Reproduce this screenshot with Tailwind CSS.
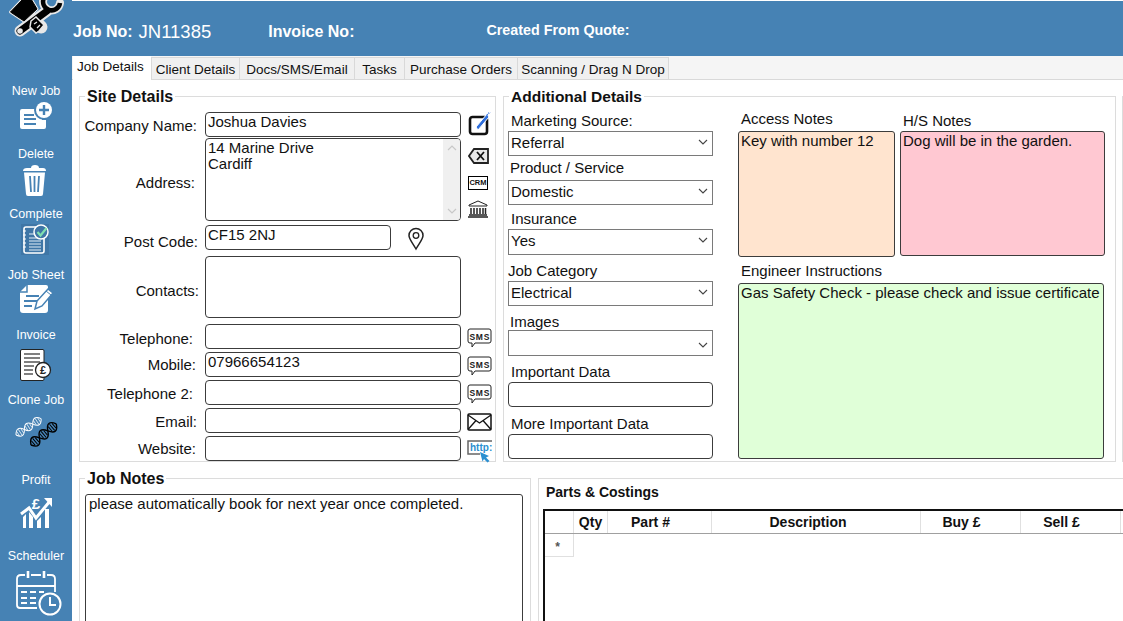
<!DOCTYPE html>
<html lang="en">
<head>
    <meta charset="UTF-8">
    <title>Job Details</title>
    <script src="https://cdn.jsdelivr.net/npm/@tailwindcss/browser@4"></script>
</head>
<body class="bg-white">
<div class="flex w-[1123px] h-[621px] overflow-hidden [font-family:'Liberation_Sans',sans-serif] text-[15px] leading-4 text-[#111]">

    <!-- sidebar -->
    <aside class="w-[72px] shrink-0 bg-[#4682b4] text-white text-[12.500px] text-center">
        <div class="h-[83px]">
            <svg width="72" height="42" viewBox="0 0 72 42">
                <g fill="none" stroke="#e8e8e8" stroke-linecap="round" stroke-linejoin="round">
                    <path d="M10.500 12 L23 -1 H31 L37 9 L24 21Z" fill="#e8e8e8" stroke-width="3"/>
                    <path d="M29 16 L41 27" stroke-width="13"/>
                    <path d="M20 31 L47 11" stroke-width="11"/>
                    <path d="M44 -2 A8.500 8.500 0 1 0 60 3" stroke-width="8"/>
                </g>
                <g fill="none" stroke="#000" stroke-linejoin="round">
                    <path d="M10.500 12 L23 -1 H31 L37 9 L24 21Z" fill="#000" stroke-width="1"/>
                    <path d="M20 31 L47 11" stroke-width="7" stroke-linecap="round"/>
                    <path d="M44 -2 A8.500 8.500 0 1 0 60 3" stroke-width="4.500"/>
                </g>
                <path d="M31 21 L36 17 L44 25 L39 31 L36 33 L30 27Z" fill="#000" stroke="#e8e8e8" stroke-width="1.500"/>
                <path d="M34 24 L37 22 M37 28 L40 25" stroke="#e8e8e8" stroke-width="1.300"/>
                <circle cx="20" cy="31" r="2.800" fill="#e8e8e8"/>
            </svg>
        </div>
        <div class="h-[63px] flex flex-col items-center">
            <span>New Job</span>
            <svg class="mt-[3px]" width="72" height="30" viewBox="0 102 72 30">
                <path d="M22 109 H42 V120 H46 V127 Q46 129 44 129 H22 Q20 129 20 127 V111 Q20 109 22 109Z" fill="#fff"/>
                <circle cx="44" cy="110" r="10" fill="#4682b4"/>
                <circle cx="44" cy="110" r="8" fill="#fff"/>
                <path d="M44 105 V115 M39 110 H49" stroke="#4682b4" stroke-width="2.400"/>
                <path d="M24 115 H34 M24 119 H36 M24 124 H36" stroke="#4682b4" stroke-width="2"/>
            </svg>
        </div>
        <div class="h-[60px] flex flex-col items-center">
            <span>Delete</span>
            <svg class="mt-[3px]" width="72" height="32" viewBox="0 165 72 32">
                <path d="M23 171 Q23 168 27 168 H31 Q31 165 35 165 Q39 165 39 168 H43 Q46 168 46 171 Z" fill="#fff"/>
                <path d="M24 172.500 H45 L43 194 Q43 196 41 196 H28 Q26 196 26 194Z" fill="#fff"/>
                <path d="M30 176 L31 192 M34.500 176 V192 M39 176 L38 192" stroke="#4682b4" stroke-width="1.800"/>
            </svg>
        </div>
        <div class="h-[61px] flex flex-col items-center">
            <span>Complete</span>
            <svg class="mt-0.5" width="72" height="32" viewBox="0 224 72 32">
                <rect x="21" y="224" width="28" height="31" fill="#3f76a6"/>
                <rect x="24" y="227" width="20" height="26" rx="2" fill="#3f76a6" stroke="#fff" stroke-width="1.600"/>
                <path d="M23 231 H26 M23 235 H26 M23 239 H26 M23 243 H26 M23 247 H26" stroke="#fff" stroke-width="1.200"/>
                <path d="M29 234 H35 M29 238 H41 M29 241 H41 M29 244 H41 M29 247 H41 M29 250 H41" stroke="#e4eef6" stroke-width="1.200"/>
                <circle cx="41" cy="232" r="7" fill="#3f76a6" stroke="#fff" stroke-width="1.500"/>
                <path d="M37.500 232 L40.500 235.500 L46.500 228" fill="none" stroke="#7fe0b0" stroke-width="2.200"/>
            </svg>
        </div>
        <div class="h-[60px] flex flex-col items-center">
            <span>Job Sheet</span>
            <svg class="mt-px" width="72" height="31" viewBox="0 284 72 31">
                <path d="M27 285 H46 Q48 285 48 287 V310 Q48 313 45 313 H23 Q20 313 20 310 V292Z" fill="#fff"/>
                <path d="M27 285 V292 H20" fill="none" stroke="#4682b4" stroke-width="1.500"/>
                <path d="M26 296 H39 M24 301 H37 M24 306 H32" stroke="#4682b4" stroke-width="2"/>
                <path d="M35 309 L37 301 L48 289 L53 293 L42 306Z" fill="#fff" stroke="#4682b4" stroke-width="1.500"/>
                <path d="M46 291 L51 295" stroke="#4682b4" stroke-width="1"/>
            </svg>
        </div>
        <div class="h-[65px] flex flex-col items-center">
            <span>Invoice</span>
            <svg class="mt-1.5" width="72" height="33" viewBox="0 349 72 33">
                <path d="M22 349.500 H43 Q44 349.500 44 351 V379 Q44 380.500 43 380.500 H22 Q20.500 380.500 20.500 379 V351 Q20.500 349.500 22 349.500Z" fill="#fff" stroke="#222"/>
                <path d="M24 354 H40 M24 358 H40 M24 362 H40 M24 366 H34 M24 370 H33 M24 374 H33" stroke="#555" stroke-width="1.300"/>
                <circle cx="43" cy="370" r="7.500" fill="#fff" stroke="#222" stroke-width="1.300"/>
                <text x="43" y="374" text-anchor="middle" font-size="11" font-weight="700" fill="#222">£</text>
            </svg>
        </div>
        <div class="h-[80px] flex flex-col items-center">
            <span>Clone Job</span>
            <svg class="mt-[7px]" width="72" height="34" viewBox="0 414 72 34">
                <g transform="translate(16 434) rotate(-33)" fill="none" stroke="#fff" stroke-width="1">
                    <path d="M0 0 Q5 -8 10 0 T20 0 T30 0"/>
                    <path d="M0 0 Q5 8 10 0 T20 0 T30 0"/>
                    <path d="M2.500 -2.500 V2.500 M5 -3.500 V3.500 M7.500 -2.500 V2.500 M12.500 -2.500 V2.500 M15 -3.500 V3.500 M17.500 -2.500 V2.500 M22.500 -2.500 V2.500 M25 -3.500 V3.500 M27.500 -2.500 V2.500" stroke-width="0.700"/>
                </g>
                <g transform="translate(31 444) rotate(-40)" fill="none" stroke="#000" stroke-width="1.400">
                    <path d="M0 0 Q5.500 -10 11 0 T22 0 T33 0"/>
                    <path d="M0 0 Q5.500 10 11 0 T22 0 T33 0"/>
                    <path d="M3 -3 V3 M5.500 -4 V4 M8 -3 V3 M14 -3 V3 M16.500 -4 V4 M19 -3 V3 M25 -3 V3 M27.500 -4 V4 M30 -3 V3" stroke-width="1"/>
                </g>
            </svg>
        </div>
        <div class="h-[76px] flex flex-col items-center">
            <span>Profit</span>
            <svg class="mt-[5px]" width="72" height="37" viewBox="0 492 72 37">
                <text x="36" y="508" text-anchor="middle" font-size="15" font-weight="700" fill="#fff">£</text>
                <path d="M21 513 L29 507 L36 517 L50 500" fill="none" stroke="#fff" stroke-width="3"/>
                <path d="M44 497 H52 V506Z" fill="#fff"/>
                <path d="M23 516 L26 513 V527 H23Z M29 511 L33 516 V527 H29Z M37 520 L41 516 V527 H37Z M45 508 H49 V527 H45Z" fill="#fff"/>
            </svg>
        </div>
        <div class="h-[74px] flex flex-col items-center">
            <span>Scheduler</span>
            <svg class="mt-1.5" width="72" height="46" viewBox="0 570 72 46">
                <g fill="none" stroke="#fff" stroke-width="1.800">
                    <path d="M37 608 H20 Q17 608 17 605 V579 Q17 575 21 575 H25 M31 575 H41 M47 575 H51 Q55 575 55 579 V592"/>
                    <path d="M17 586 H55"/>
                    <path d="M28 571 V578 M44 571 V578" stroke-width="2.600"/>
                    <circle cx="50" cy="604" r="10.500" stroke-width="2"/>
                    <path d="M50 597 V605 H56" stroke-width="2"/>
                    <path d="M21 592 H27 M30 592 H36 M39 592 H44 M21 598 H27 M30 598 H36 M21 603 H27 M30 603 H36"/>
                </g>
            </svg>
        </div>
    </aside>

    <main class="flex-1 min-w-0 flex flex-col">
        <div class="h-px bg-white"></div>

        <!-- header -->
        <header class="h-[55px] bg-[#4682b4] text-white font-bold flex items-end pb-4">
            <span class="ml-px text-[16px]">Job No:</span>
            <span class="ml-1.5 text-[18.500px] font-normal">JN11385</span>
            <span class="ml-[57px] text-[16px]">Invoice No:</span>
            <span class="ml-[132px] text-[14.300px] pb-0.5">Created From Quote:</span>
        </header>

        <!-- tabs -->
        <nav class="h-6 bg-[#f5f5f5] border-b border-[#d9d9d9] flex items-end text-[13.500px] pl-px">
            <div class="w-[78px] h-6 bg-white -mb-px pt-[3px] pl-1">Job Details</div>
            <div class="w-[89px] h-[22px] bg-[#f0f0f0] border border-[#d9d9d9] border-b-0 pt-1 text-center">Client Details</div>
            <div class="w-[115px] h-[22px] bg-[#f0f0f0] border-r border-t border-[#d9d9d9] pt-1 text-center">Docs/SMS/Email</div>
            <div class="w-[50px] h-[22px] bg-[#f0f0f0] border-r border-t border-[#d9d9d9] pt-1 text-center">Tasks</div>
            <div class="w-[113px] h-[22px] bg-[#f0f0f0] border-r border-t border-[#d9d9d9] pt-1 text-center">Purchase Orders</div>
            <div class="w-[151px] h-[22px] bg-[#f0f0f0] border-r border-t border-[#d9d9d9] pt-1 text-center">Scanning / Drag N Drop</div>
        </nav>

        <div class="flex-1 pt-4 pl-[7px] min-h-0">
            <div class="flex h-[366px]">

                <!-- site details -->
                <section class="relative w-[417px] shrink-0 border border-[#dcdcdc] pt-[15px]">
                    <h2 class="absolute -top-[8px] left-[5px] bg-white px-0.5 font-bold text-[16px]">Site Details</h2>

                    <div class="flex items-center h-[25px]">
                        <label class="w-[120px] text-right pr-[3px] pt-[3px]">Company Name:</label>
                        <div class="ml-[5px] w-[256px] h-full border border-[#3c3c3c] rounded-[4px] px-0.5 pt-px">Joshua Davies</div>
                        <svg class="ml-[7px]" width="24" height="25" viewBox="0 0 24 25">
                            <rect x="2" y="5" width="17" height="17" rx="2.500" fill="none" stroke="#111" stroke-width="2.600"/>
                            <path d="M8 15 L10 18 L21 5 L19 2Z" fill="#2f6fdc" stroke="#fff"/>
                            <path d="M19 3 L22 0" stroke="#2f6fdc" stroke-width="1.500" stroke-dasharray="1 1"/>
                        </svg>
                    </div>

                    <div class="flex mt-px h-[83px]">
                        <label class="w-[120px] text-right pr-[5px] pt-[37px]">Address:</label>
                        <div class="ml-[5px] w-[256px] h-full border border-[#3c3c3c] rounded-[4px] pl-0.5 pt-px flex">
                            <div class="flex-1">14 Marine Drive<br>Cardiff</div>
                            <div class="w-[17px] -mt-px bg-[#f0f0f0] flex flex-col justify-between py-1.5 items-center rounded-r-[3px]">
                                <svg width="10" height="6" viewBox="0 0 10 6"><path d="M1 5 L5 1 L9 5" fill="none" stroke="#c8c8c8" stroke-width="1.200"/></svg>
                                <svg width="10" height="6" viewBox="0 0 10 6"><path d="M1 1 L5 5 L9 1" fill="none" stroke="#c8c8c8" stroke-width="1.200"/></svg>
                            </div>
                        </div>
                        <div class="ml-[7px] flex flex-col">
                            <svg class="mt-[9px]" width="22" height="18" viewBox="0 0 22 18">
                                <path d="M6 2 H20 V16 H6 L1 9Z" fill="#e8e8e8" stroke="#222" stroke-width="1.800"/>
                                <path d="M9 5 L16 13 M16 5 L9 13" stroke="#111" stroke-width="1.800"/>
                            </svg>
                            <div class="mt-[11px] w-5 h-[14px] border border-black text-[7.500px] font-bold text-center leading-[12px]">CRM</div>
                            <svg class="mt-[10px]" width="20" height="18" viewBox="0 0 20 18">
                                <path d="M10 1 L19 5 V6 H1 V5Z" fill="none" stroke="#222"/>
                                <path d="M3 8 V14 M6 8 V14 M9 8 V14 M12 8 V14 M15 8 V14 M17.500 8 V14" stroke="#222" stroke-width="1.500"/>
                                <path d="M1 15 H19 M0 17 H20" stroke="#222" stroke-width="1.300"/>
                            </svg>
                        </div>
                    </div>

                    <div class="flex items-center h-[25px] mt-1">
                        <label class="w-[120px] text-right pr-0.5 pt-2">Post Code:</label>
                        <div class="ml-[5px] w-[186px] h-full border border-[#3c3c3c] rounded-[4px] px-0.5 pt-px">CF15 2NJ</div>
                        <svg class="ml-[16px] mt-[2px]" width="18" height="24" viewBox="0 0 18 24">
                            <path d="M9 22 C5 15 2 12 2 8.500 A7 7 0 0 1 16 8.500 C16 12 13 15 9 22Z" fill="none" stroke="#222" stroke-width="1.500"/>
                            <circle cx="9" cy="8.500" r="2.800" fill="none" stroke="#222" stroke-width="1.300"/>
                        </svg>
                    </div>

                    <div class="flex items-center h-[62px] mt-1.5">
                        <label class="w-[120px] text-right pr-px pt-2">Contacts:</label>
                        <div class="ml-[5px] w-[256px] h-full border border-[#3c3c3c] rounded-[4px]"></div>
                    </div>

                    <div class="flex items-center h-[25px] mt-1.5">
                        <label class="w-[120px] text-right pr-[7px] pt-1">Telephone:</label>
                        <div class="ml-[5px] w-[256px] h-full border border-[#3c3c3c] rounded-[4px]"></div>
                        <svg class="ml-1.5 mt-[3px]" width="25" height="20" viewBox="0 0 25 20">
                            <path d="M3 1 H22 Q24 1 24 3 V13 Q24 15 22 15 H8 L5 19 V15 H3 Q1 15 1 13 V3 Q1 1 3 1Z" fill="#fff" stroke="#222"/>
                            <text x="12.800" y="11.500" text-anchor="middle" font-size="8.500" letter-spacing="0.800" font-weight="700" fill="#222">SMS</text>
                        </svg>
                    </div>

                    <div class="flex items-center h-[25px] mt-[3px]">
                        <label class="w-[120px] text-right pr-1">Mobile:</label>
                        <div class="ml-[5px] w-[256px] h-full border border-[#3c3c3c] rounded-[4px] px-0.5 pt-px">07966654123</div>
                        <svg class="ml-1.5 mt-[3px]" width="25" height="20" viewBox="0 0 25 20">
                            <path d="M3 1 H22 Q24 1 24 3 V13 Q24 15 22 15 H8 L5 19 V15 H3 Q1 15 1 13 V3 Q1 1 3 1Z" fill="#fff" stroke="#222"/>
                            <text x="12.800" y="11.500" text-anchor="middle" font-size="8.500" letter-spacing="0.800" font-weight="700" fill="#222">SMS</text>
                        </svg>
                    </div>

                    <div class="flex items-center h-[25px] mt-[3px]">
                        <label class="w-[120px] text-right pr-[7px] pt-0.5">Telephone 2:</label>
                        <div class="ml-[5px] w-[256px] h-full border border-[#3c3c3c] rounded-[4px]"></div>
                        <svg class="ml-1.5 mt-[3px]" width="25" height="20" viewBox="0 0 25 20">
                            <path d="M3 1 H22 Q24 1 24 3 V13 Q24 15 22 15 H8 L5 19 V15 H3 Q1 15 1 13 V3 Q1 1 3 1Z" fill="#fff" stroke="#222"/>
                            <text x="12.800" y="11.500" text-anchor="middle" font-size="8.500" letter-spacing="0.800" font-weight="700" fill="#222">SMS</text>
                        </svg>
                    </div>

                    <div class="flex items-center h-[25px] mt-[3px]">
                        <label class="w-[120px] text-right pr-[3px] pt-0.5">Email:</label>
                        <div class="ml-[5px] w-[256px] h-full border border-[#3c3c3c] rounded-[4px]"></div>
                        <svg class="ml-1.5 mt-[2px]" width="25" height="18" viewBox="0 0 25 18">
                            <rect x="1" y="1" width="23" height="16" rx="1" fill="#fff" stroke="#111" stroke-width="1.500"/>
                            <path d="M1 2 L12.500 10 L24 2 M1 16.500 L9 7.500 M24 16.500 L16 7.500" fill="none" stroke="#111" stroke-width="1.300"/>
                        </svg>
                    </div>

                    <div class="flex items-center h-[25px] mt-[3px]">
                        <label class="w-[120px] text-right pr-1">Website:</label>
                        <div class="ml-[5px] w-[256px] h-full border border-[#3c3c3c] rounded-[4px]"></div>
                        <svg class="ml-1.5 mt-[5px]" width="25" height="23" viewBox="0 0 25 23">
                            <path d="M25 1 H1 V14 H13" fill="none" stroke="#666" stroke-width="1.500"/>
                            <text x="3" y="11" font-size="10" font-weight="700" fill="#2b8fd0">http:</text>
                            <path d="M13 12 L22 16 L19 17.500 L22.500 21 L20.500 22.500 L17 19 L15.500 21.500Z" fill="#2b8fd0"/>
                        </svg>
                    </div>
                </section>

                <!-- additional details -->
                <section class="relative ml-[7px] w-[613px] shrink-0 border border-[#dcdcdc] flex pl-1">
                    <h2 class="absolute -top-[8px] left-[5px] bg-white px-0.5 font-bold text-[15.500px]">Additional Details</h2>

                    <div class="w-[205px] shrink-0 pt-4">
                        <label class="block h-4 pl-[3px]">Marketing Source:</label>
                        <div class="mt-0.5 h-[25px] border border-[#7a7a7a] pl-0.5 pt-[3px] flex justify-between">Referral
                            <svg class="mr-1 mt-1" width="10" height="6" viewBox="0 0 10 6"><path d="M1 1 L5 5 L9 1" fill="none" stroke="#444" stroke-width="1.100"/></svg>
                        </div>
                        <label class="block h-4 mt-1 pl-0.5">Product / Service</label>
                        <div class="mt-1 h-[25px] border border-[#7a7a7a] pl-0.5 pt-[3px] flex justify-between">Domestic
                            <svg class="mr-1 mt-1" width="10" height="6" viewBox="0 0 10 6"><path d="M1 1 L5 5 L9 1" fill="none" stroke="#444" stroke-width="1.100"/></svg>
                        </div>
                        <label class="block h-4 mt-1.5 pl-[3px]">Insurance</label>
                        <div class="mt-0.5 h-[26px] border border-[#7a7a7a] pl-0.5 pt-[3px] flex justify-between">Yes
                            <svg class="mr-1 mt-1" width="10" height="6" viewBox="0 0 10 6"><path d="M1 1 L5 5 L9 1" fill="none" stroke="#444" stroke-width="1.100"/></svg>
                        </div>
                        <label class="block h-4 mt-2">Job Category</label>
                        <div class="mt-0.5 h-[25px] border border-[#7a7a7a] pl-0.5 pt-[3px] flex justify-between">Electrical
                            <svg class="mr-1 mt-1" width="10" height="6" viewBox="0 0 10 6"><path d="M1 1 L5 5 L9 1" fill="none" stroke="#444" stroke-width="1.100"/></svg>
                        </div>
                        <label class="block h-4 mt-2 pl-0.5">Images</label>
                        <div class="h-[26px] border border-[#7a7a7a] pl-0.5 pt-[3px] flex justify-end">
                            <svg class="mr-1 mt-2" width="10" height="6" viewBox="0 0 10 6"><path d="M1 1 L5 5 L9 1" fill="none" stroke="#444" stroke-width="1.100"/></svg>
                        </div>
                        <label class="block h-4 mt-2 pl-[3px]">Important Data</label>
                        <div class="mt-0.5 h-[25px] border border-[#3c3c3c] rounded-[4px]"></div>
                        <label class="block h-4 mt-[9px] pl-[3px]">More Important Data</label>
                        <div class="mt-0.5 h-[25px] border border-[#3c3c3c] rounded-[4px]"></div>
                    </div>

                    <div class="ml-[25px] pt-[14px]">
                        <div class="flex gap-[5px]">
                            <div class="w-[157px]">
                                <label class="block h-4 pl-[3px]">Access Notes</label>
                                <div class="mt-1 h-[126px] bg-[#ffe4cf] border border-[#3c3c3c] rounded-[3px] px-0.5 pt-px">Key with number 12</div>
                            </div>
                            <div class="w-[205px]">
                                <label class="block h-4 pl-[3px] mt-0.5">H/S Notes</label>
                                <div class="mt-0.5 h-[125px] bg-[#ffc8d2] border border-[#3c3c3c] rounded-[3px] px-0.5 pt-px">Dog will be in the garden.</div>
                            </div>
                        </div>
                        <label class="block h-4 pl-[3px] mt-1.5">Engineer Instructions</label>
                        <div class="mt-1 w-[366px] h-[176px] bg-[#e0ffd8] border border-[#3c3c3c] rounded-[3px] px-0.5 pt-px">Gas Safety Check - please check and issue certificate</div>
                    </div>
                </section>

                <div class="ml-[6px] w-5 shrink-0 border border-[#dcdcdc]"></div>
            </div>

            <div class="flex mt-4 h-[200px]">
                <!-- job notes -->
                <section class="relative w-[452px] shrink-0 border border-[#dcdcdc] pt-[15px] pl-[5px]">
                    <h2 class="absolute -top-[8px] left-[5px] bg-white px-0.5 font-bold text-[16px]">Job Notes</h2>
                    <div class="w-[438px] h-[180px] border border-[#3c3c3c] rounded-[3px] px-[3px] pt-px">please automatically book for next year once completed.</div>
                </section>

                <!-- parts -->
                <section class="ml-[7px] w-[640px] shrink-0 border border-[#dcdcdc] pl-1">
                    <h2 class="h-[30px] pt-[5px] pl-[3px] font-bold text-[14px]">Parts &amp; Costings</h2>
                    <div class="border-t-2 border-l-2 border-[#111] h-[160px] font-bold text-[14px]">
                        <div class="grid grid-cols-[29px_34px_104px_209px_100px_100px] h-[23px] border-b border-[#a0a0a0] text-center leading-[22px]">
                            <div class="border-r border-[#e0e0e0]"></div>
                            <div class="border-r border-[#e0e0e0]">Qty</div>
                            <div class="border-r border-[#e0e0e0] pr-[18px]">Part #</div>
                            <div class="border-r border-[#e0e0e0] pr-4">Description</div>
                            <div class="border-r border-[#e0e0e0] pr-[18px]">Buy £</div>
                            <div class="border-r border-[#e0e0e0] pr-[18px]">Sell £</div>
                        </div>
                        <div class="w-[29px] h-[23px] border-r border-b border-[#e0e0e0] text-center pr-[3px] text-[#555] text-[12px] leading-[26px]">*</div>
                    </div>
                </section>
            </div>
        </div>
    </main>
</div>
</body>
</html>
